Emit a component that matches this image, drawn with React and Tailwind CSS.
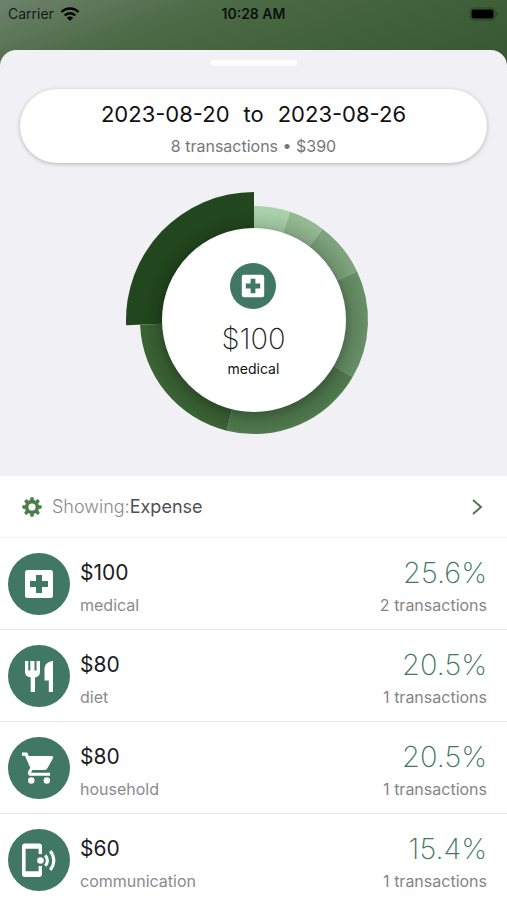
import React from 'react';

const CENTER = 130;
const RING_RADIUS = 114;
const SELECTED_RADIUS = 128;

const slices = [
    { percent: 5.13, color: '#a9d1a9' },
    { percent: 5.13, color: '#93b991' },
    { percent: 7.69, color: '#7da37c' },
    { percent: 15.4, color: '#668f65' },
    { percent: 20.5, color: '#4f7a4d' },
    { percent: 20.5, color: '#3a6335' },
    { percent: 25.65, color: '#22471e', selected: true },
];

const categories = [
    { name: 'medical', amount: '$100', percent: '25.6%', count: 2 },
    { name: 'diet', amount: '$80', percent: '20.5%', count: 1 },
    { name: 'household', amount: '$80', percent: '20.5%', count: 1 },
    { name: 'communication', amount: '$60', percent: '15.4%', count: 1 },
];

const pointAt = (radius, percent) => {
    const angle = (percent / 100) * 2 * Math.PI;
    return `${CENTER + radius * Math.sin(angle)} ${CENTER - radius * Math.cos(angle)}`;
};

/**
 * Glyphs share a 40x40 grid
 */
const CategoryIcon = ({ name, className }) => (
    <svg viewBox="0 0 40 40" fill="currentColor" className={className} aria-hidden="true">
        {name === 'medical' && (
            <path
                fillRule="evenodd"
                d="M8.500 6h23a2.500 2.500 0 0 1 2.500 2.500v23a2.500 2.500 0 0 1-2.500 2.500h-23A2.500 2.500 0 0 1 6 31.500v-23A2.500 2.500 0 0 1 8.500 6zM17 11v6h-6v6h6v6h6v-6h6v-6h-6v-6z"
            />
        )}
        {name === 'diet' && (
            <>
                <path d="M6 5h3.300v9.500h2V5h4.200v9.500h2V5H21v11c0 3-2 5-5 5.400V36h-4.300V21.400C8 21 6 19 6 16z" />
                <path d="M34 5v31h-4.200V24.500H25.500V13c0-4.500 3.500-7.500 8.500-8z" />
            </>
        )}
        {name === 'household' && (
            <>
                <path d="M3 4.500h5.200l1.600 3.400h22.900c1.200 0 1.900 1.200 1.400 2.200l-5.700 10.200a3 3 0 0 1-2.700 1.600H13.500L12 24.700h19v3.100H11.600c-2.200 0-3.400-2.400-2.400-4.300l2.100-3.700L5.900 7.800H3z" />
                <circle cx="12.300" cy="32.500" r="3.200" />
                <circle cx="27.800" cy="32.500" r="3.200" />
            </>
        )}
        {name === 'communication' && (
            <>
                <path d="M6 3.500h14a3 3 0 0 1 3 3V14h-3.400V8.800H6.600v22.400h13V26H23v8a3 3 0 0 1-3 3H6a3 3 0 0 1-3-3V6.500a3 3 0 0 1 3-3z" />
                <circle cx="21.500" cy="20.500" r="3.300" />
                <path
                    d="M26.300 15.200q4.200 5.300 0 10.600M31.300 11q7 9.500 0 19"
                    fill="none"
                    stroke="currentColor"
                    strokeWidth="3"
                />
            </>
        )}
    </svg>
);

const GearIcon = () => (
    <svg viewBox="0 0 20 20" className="size-5 text-[#4c7d49]" aria-hidden="true">
        <circle cx="10" cy="10" r="5.400" fill="none" stroke="currentColor" strokeWidth="3.600" />
        {[0, 45, 90, 135, 180, 225, 270, 315].map((angle) => (
            <rect
                key={angle}
                x="8.200"
                y="0.300"
                width="3.600"
                height="4"
                rx="1"
                fill="currentColor"
                transform={`rotate(${angle} 10 10)`}
            />
        ))}
    </svg>
);

const StatusBar = () => (
    <div className="grid grid-cols-3 items-center h-7 px-2 text-sm text-black">
        <div className="flex items-center gap-[6px] text-black/80">
            <span>Carrier</span>
            <svg viewBox="0 0 20 15" className="w-5 h-4 text-black" fill="none" stroke="currentColor" aria-hidden="true">
                <path d="M1.500 5.500a12 12 0 0 1 17 0M4.700 9a7.500 7.500 0 0 1 10.600 0" strokeWidth="2.400" />
                <path d="M10 14.500L6.900 11.300a4.400 4.400 0 0 1 6.200 0z" fill="currentColor" stroke="none" />
            </svg>
        </div>
        <span className="text-center font-semibold text-black/85">10:28 AM</span>
        <svg viewBox="0 0 30 14" className="w-[30px] h-[14px] justify-self-end" aria-hidden="true">
            <rect x="1" y="1" width="25" height="12" rx="3.500" fill="none" stroke="#000" strokeOpacity="0.3" />
            <rect x="2.500" y="2.500" width="22" height="9" rx="2" fill="#000" />
            <path d="M27.500 4.800q2.400 2.200 0 4.400z" fill="#000" fillOpacity="0.4" />
        </svg>
    </div>
);

const ExpenseChart = () => {
    let total = 0;

    return (
        <div className="grid place-items-center mt-[27px]">
            <svg viewBox="0 0 260 260" className="col-start-1 row-start-1 size-[260px]" role="img" aria-label="Expense by category">
                <defs>
                    <radialGradient id="shade" gradientUnits="userSpaceOnUse" cx="130" cy="133" r="112">
                        <stop offset="0.78" stopColor="#000" stopOpacity="0.3" />
                        <stop offset="0.88" stopColor="#000" stopOpacity="0.1" />
                        <stop offset="1" stopColor="#000" stopOpacity="0" />
                    </radialGradient>
                </defs>
                {slices.map((slice) => {
                    const start = total;
                    total += slice.percent;
                    const radius = slice.selected ? SELECTED_RADIUS : RING_RADIUS;
                    return (
                        <path
                            key={start}
                            fill={slice.color}
                            d={`M${CENTER} ${CENTER}L${pointAt(radius, start)}A${radius} ${radius} 0 0 1 ${pointAt(radius, total)}Z`}
                        />
                    );
                })}
                <circle cx={CENTER} cy={CENTER} r="112" fill="url(#shade)" />
                <circle cx={CENTER} cy={CENTER} r="92" fill="#fff" />
            </svg>
            <div className="col-start-1 row-start-1 flex flex-col items-center pt-[2px]">
                <div className="flex items-center justify-center size-[46px] rounded-full bg-[#417765] text-white">
                    <CategoryIcon name="medical" className="size-8" />
                </div>
                <p className="mt-3 text-[29px] leading-9 font-extralight text-[#222222]">$100</p>
                <p className="mt-[2px] text-sm leading-5 text-[#111111]">medical</p>
            </div>
        </div>
    );
};

const CategoryRow = ({ category }) => (
    <li className="flex items-center h-[92px] pl-2 pr-5 border-b border-[#e6e6e8]">
        <div className="flex items-center justify-center shrink-0 size-[62px] rounded-full bg-[#417765] text-white">
            <CategoryIcon name={category.name} className="size-10" />
        </div>
        <div className="flex-1 ml-[10px] pt-[10px]">
            <p className="text-[21px] leading-8 text-[#1c1c1e]">{category.amount}</p>
            <p className="text-base leading-8 text-[#8a8a8d]">{category.name}</p>
        </div>
        <div className="pt-[10px] text-right">
            <p className="text-[29px] leading-8 font-extralight text-[#417765]">{category.percent}</p>
            <p className="text-base leading-8 text-[#858588]">{category.count} transactions</p>
        </div>
    </li>
);

const App = () => {
    return (
        <div className="min-h-screen bg-[#f0f0f5] font-['Inter','Liberation_Sans',sans-serif]">
            <div className="bg-linear-160 from-[#6d826b] via-[#4b6a45] via-[80px] to-[#35562e] to-[240px]">
                <StatusBar />
                <div className="mt-[22px] h-[16px] rounded-t-2xl bg-[#f0f0f5] pt-[10px]">
                    <div className="mx-auto w-[86px] h-[6px] rounded-full bg-white" />
                </div>
            </div>
            <main>
                <button
                    type="button"
                    className="flex flex-col items-center mt-[23px] mx-5 w-[calc(100%-40px)] h-[74px] pt-[9px] rounded-full bg-white shadow-[0_1px_4px_rgba(0,0,0,0.25)]"
                >
                    <span className="flex gap-[14px] text-[22px] leading-8 text-[#111111]">
                        <span>2023-08-20</span>
                        <span>to</span>
                        <span>2023-08-26</span>
                    </span>
                    <span className="text-base leading-8 text-[#77777a]">8 transactions • $390</span>
                </button>

                <ExpenseChart />

                <section className="mt-[26px] bg-white">
                    <button
                        type="button"
                        className="flex items-center w-full h-[62px] pl-[22px] pr-5 border-b border-[#f3f3f5] text-lg text-left"
                    >
                        <GearIcon />
                        <span className="ml-[10px] font-light text-[#8a8a8d]">Showing:</span>
                        <span className="flex-1 text-[#505052]">Expense</span>
                        <svg viewBox="0 0 20 20" className="size-5" fill="none" stroke="#55774f" strokeWidth="2" aria-hidden="true">
                            <path d="M6 3l8 7-8 7" />
                        </svg>
                    </button>
                    <ul>
                        {categories.map((category) => (
                            <CategoryRow key={category.name} category={category} />
                        ))}
                    </ul>
                </section>
            </main>
        </div>
    );
};

export default App;
